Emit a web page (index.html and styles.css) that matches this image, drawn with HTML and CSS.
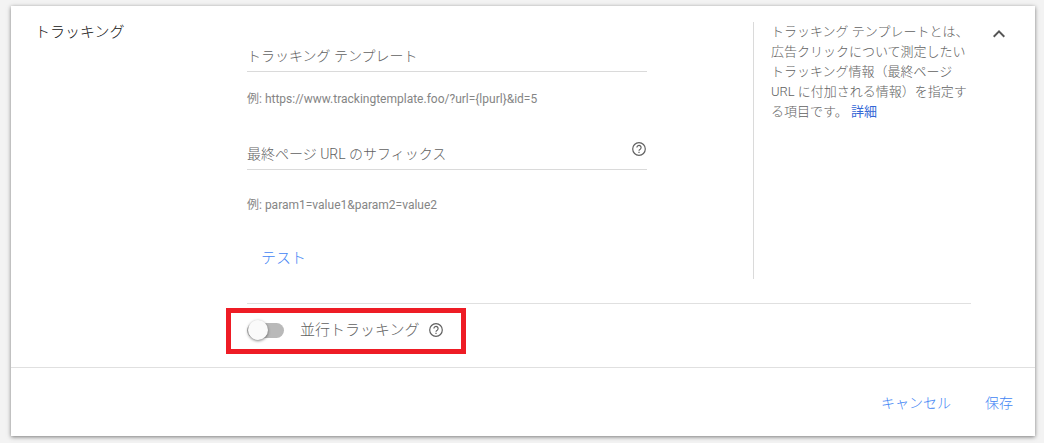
FILE: index.html
```html
<!DOCTYPE html>
<html lang="ja">
  <head>
    <meta charset="utf-8" />
    <title>トラッキング</title>
    <meta name="viewport" content="width=device-width" />
    <link rel="stylesheet" href="styles.css">
  </head>
  <body>
    <form class="card">
      <div class="panel">
        <h2 class="panel-title">トラッキング</h2>
        <div class="panel-main">
          <div class="settings">
            <div class="fields">
              <div class="field">
                <div class="field-box">
                  <input type="text" id="template" aria-label="トラッキング テンプレート" placeholder="トラッキング テンプレート" />
                </div>
                <div class="hint">例: https://www.trackingtemplate.foo/?url={lpurl}&amp;id=5</div>
              </div>
              <div class="field field-suffix">
                <div class="field-box">
                  <input type="text" id="suffix" aria-label="最終ページ URL のサフィックス" placeholder="最終ページ URL のサフィックス" />
                  <button type="button" class="help-button" aria-label="ヘルプ">
                    <svg class="icon" viewBox="0 0 16 16"><circle cx="8" cy="8" r="6.300"/><path d="M5.900 6.500a2.100 2.100 0 1 1 3.300 1.700C8.400 8.700 8 9 8 9.800M8 10.800v1.300"/></svg>
                  </button>
                </div>
                <div class="hint">例: param1=value1&amp;param2=value2</div>
              </div>
              <button type="button" class="text-button test-button">テスト</button>
            </div>
            <aside class="about">
              トラッキング テンプレートとは、広告クリックについて測定したいトラッキング情報（最終ページ URL に付加される情報）を指定する項目です。 <a href="#">詳細</a>
            </aside>
          </div>
          <div class="parallel">
            <div class="highlight">
              <input type="checkbox" class="switch" id="parallel" />
              <label for="parallel">並行トラッキング</label>
              <button type="button" class="help-button" aria-label="ヘルプ">
                <svg class="icon" viewBox="0 0 16 16"><circle cx="8" cy="8" r="6.300"/><path d="M5.900 6.500a2.100 2.100 0 1 1 3.300 1.700C8.400 8.700 8 9 8 9.800M8 10.800v1.300"/></svg>
              </button>
            </div>
          </div>
        </div>
        <button type="button" class="collapse" aria-label="閉じる">
          <svg viewBox="0 0 24 24"><path d="M12 8l-6 6 1.410 1.410L12 10.830l4.590 4.580L18 14z"/></svg>
        </button>
      </div>
      <div class="actions">
        <button type="button" class="text-button">キャンセル</button>
        <button type="submit" class="text-button">保存</button>
      </div>
    </form>
  </body>
</html>
```
FILE: styles.css
```css
* {
    box-sizing: border-box;
}
body {
    margin: 0;
    padding: 6px 9px 7px 11px;
    background: #f3f3f3;
    color: #616161;
    font-family: Roboto, "Noto Sans CJK JP", sans-serif;
    font-size: 14px;
    font-weight: 300;
    line-height: 20px;
}
button,
input {
    font: inherit;
    margin: 0;
}
button {
    padding: 0;
    border: 0;
    background: none;
    cursor: pointer;
}
.card {
    background: #fff;
    box-shadow: 0 1px 4px rgba(0, 0, 0, 0.5);
}
.panel {
    display: flex;
    align-items: flex-start;
    padding: 16px 24px 13px;
}
.panel-title {
    width: 212px;
    margin: 0;
    color: #111;
    font-size: 15px;
    font-weight: 300;
}
.panel-main {
    flex: 1;
    min-width: 0;
}
.settings {
    display: flex;
    justify-content: space-between;
    padding-bottom: 24px;
    border-bottom: 1px solid #e0e0e0;
}
.fields {
    flex: 0 1 400px;
    padding-top: 18px;
}
.field-box {
    display: flex;
    align-items: center;
    height: 32px;
    border-bottom: 1px solid #dadada;
}
.field-box input {
    flex: 1;
    min-width: 0;
    padding: 0;
    border: 0;
    outline: 0;
    background: none;
    color: #212121;
}
.field-box input::placeholder {
    color: #616161;
    opacity: 1;
}
.hint {
    margin-top: 17px;
    color: #858585;
    font-size: 12px;
    font-weight: 400;
}
.field-suffix {
    margin-top: 29px;
}
.field-suffix .hint {
    margin-top: 25px;
}
.field-suffix .help-button {
    padding-bottom: 10px;
}
.help-button {
    display: flex;
}
.icon {
    width: 16px;
    height: 16px;
    fill: none;
    stroke: #616161;
    stroke-width: 1.2;
}
.text-button {
    color: #4285f4;
    font-size: 14px;
    line-height: 36px;
}
.test-button {
    margin: 25px 0 3px;
    padding: 0 14px;
    font-size: 15px;
}
.about {
    flex: 0 0 218px;
    padding-left: 17px;
    border-left: 1px solid #dadada;
    font-size: 13px;
}
.about a {
    color: #3367d6;
    font-weight: 400;
    text-decoration: none;
}
.parallel {
    display: flex;
    padding-top: 4px;
}
.highlight {
    display: flex;
    align-items: center;
    height: 46px;
    margin-left: -21px;
    padding: 0 17px 2px 16px;
    border: 5px solid #ee1c25;
    font-size: 15px;
}
.highlight label {
    margin: 0 8px 0 16px;
}
.switch {
    appearance: none;
    position: relative;
    width: 37px;
    height: 15px;
    border-radius: 8px;
    background: #b9b9b9;
}
.switch::before {
    content: "";
    position: absolute;
    top: -3px;
    left: 1px;
    width: 20px;
    height: 20px;
    border-radius: 50%;
    background: #fafafa;
    box-shadow: 0 1px 3px rgba(0, 0, 0, 0.5);
}
.switch:checked::before {
    left: 16px;
    background: #4285f4;
}
.collapse {
    width: 24px;
    height: 24px;
    margin-left: 16px;
}
.collapse svg {
    display: block;
    width: 24px;
    height: 24px;
    fill: #555;
}
.actions {
    display: flex;
    justify-content: flex-end;
    gap: 34px;
    padding: 17px 22px 15px;
    border-top: 1px solid #e0e0e0;
}
```
